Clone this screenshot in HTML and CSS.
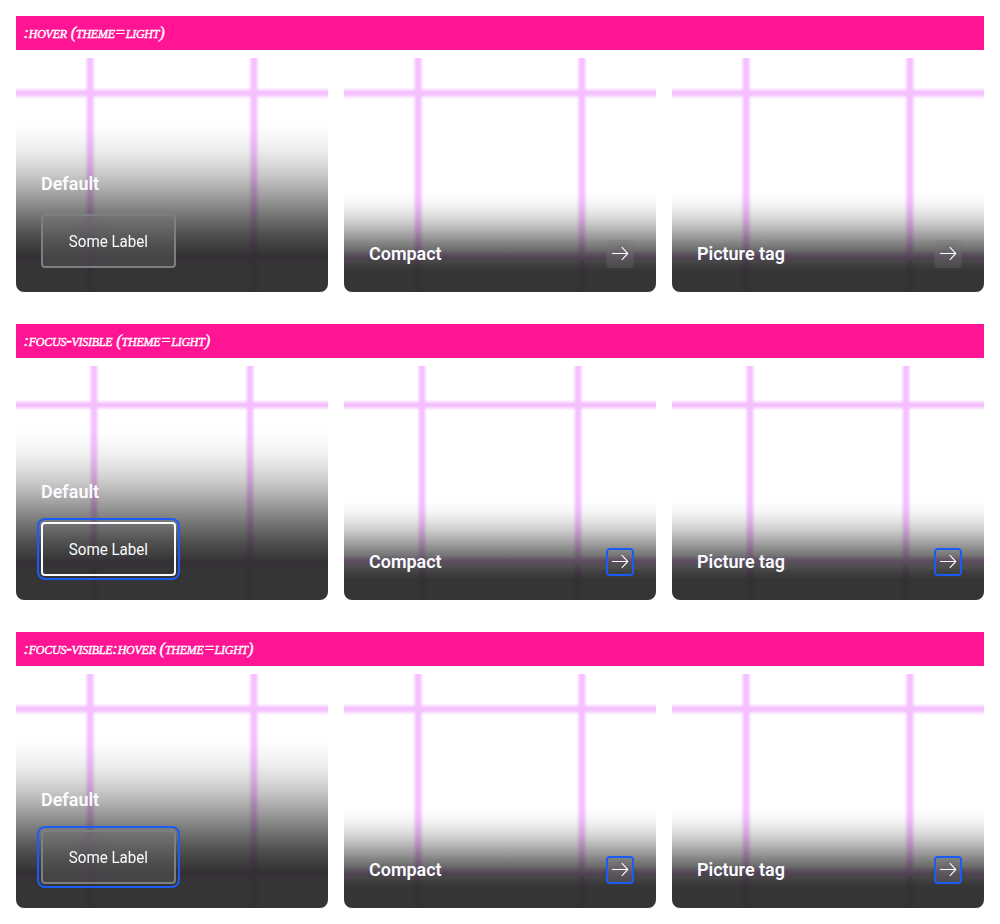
FILE: index.html
```
<!DOCTYPE html>
<html lang="en">
<head>
<meta charset="utf-8">
<title>Link tile states</title>
<link rel="stylesheet" href="styles.css">
</head>
<body>
<section class="state hover">
  <h2 class="bar">:hover (theme=light)</h2>
  <div class="tiles"></div>
</section>
<section class="state focus">
  <h2 class="bar">:focus-visible (theme=light)</h2>
  <div class="tiles"></div>
</section>
<section class="state hover focus">
  <h2 class="bar">:focus-visible:hover (theme=light)</h2>
  <div class="tiles"></div>
</section>
<template id="tiles">
  <article class="tile">
    <div class="picture"></div>
    <div class="content">
      <p class="title"><span>Default</span></p>
      <a class="button"><span>Some Label</span></a>
    </div>
  </article>
  <article class="tile compact">
    <div class="picture"></div>
    <div class="content">
      <p class="title"><span>Compact</span></p>
      <a class="arrow"><svg viewBox="0 0 28 28"><path d="M6 13.5H21.5M15.8 7.2l6 6.3-6 6.3"/></svg></a>
    </div>
  </article>
  <article class="tile compact">
    <div class="picture"></div>
    <div class="content">
      <p class="title"><span>Picture tag</span></p>
      <a class="arrow"><svg viewBox="0 0 28 28"><path d="M6 13.5H21.5M15.8 7.2l6 6.3-6 6.3"/></svg></a>
    </div>
  </article>
</template>
<script src="tiles.js"></script>
</body>
</html>
```
FILE: styles.css
```
* { box-sizing: border-box; }
body {
  margin: 0;
  padding: 16px;
  background: #fff;
  font-family: Roboto, sans-serif;
  display: flex;
  flex-direction: column;
  gap: 32px;
}
.state { display: flex; flex-direction: column; gap: 8px; }
.bar {
  margin: 0;
  height: 34px;
  padding: 0 7.5px;
  background: deeppink;
  color: #fff;
  font: italic small-caps 400 16.6px/34px "Liberation Serif", serif;
  letter-spacing: -.25px;
  -webkit-text-stroke: .4px #fff;
}
.tiles { display: grid; grid-template-columns: repeat(3, 1fr); gap: 16px; height: 234px; }
.tile {
  display: grid;
  overflow: hidden;
  border-radius: 8px;
  height: 234px;
}
.picture, .content { grid-area: 1 / 1; }
.picture {
  background:
    repeating-linear-gradient(90deg, transparent 0 72.5px, #f5bfff 77px 79px, transparent 83.5px 156px),
    repeating-linear-gradient(180deg, transparent 0 33.5px, #f5bfff 38px 40px, transparent 44.5px 156px),
    #fff;
}
.hover .picture { transform: scale(1.05); }
.content {
  position: relative;
  align-self: end;
  display: flex;
  flex-direction: column;
  align-items: flex-start;
  gap: 16px;
  padding: 52px 24px 24px 25px;
  background: linear-gradient(to top,
    rgba(31,31,31,.9) 20%,
    rgba(31,31,31,.852589) 26.67%,
    rgba(31,31,31,.768225) 33.33%,
    rgba(31,31,31,.668116) 40%,
    rgba(31,31,31,.557309) 46.67%,
    rgba(31,31,31,.442691) 53.33%,
    rgba(31,31,31,.331884) 60%,
    rgba(31,31,31,.231775) 66.67%,
    rgba(31,31,31,.147411) 73.33%,
    rgba(31,31,31,.08166) 80%,
    rgba(31,31,31,.03551) 86.67%,
    rgba(31,31,31,.008647) 93.33%,
    rgba(31,31,31,0) 100%);
}
.tile:not(.compact) .content { padding-top: 56px; }
.title {
  margin: 0;
  color: #fbfcff;
  font-weight: 600;
  font-size: 19px;
  line-height: 28px;
  white-space: nowrap;
}
.button {
  display: flex;
  justify-content: center;
  align-items: center;
  width: 135px;
  height: 54px;
  padding-top: 2px;
  border: 2px solid #fbfcff;
  border-radius: 4px;
  color: #fbfcff;
  font-size: 16px;
  line-height: 24px;
  white-space: nowrap;
}
.hover .button {
  border-color: #7e7f83;
  background: rgba(148,149,152,.18);
  backdrop-filter: blur(8px);
}
.focus .button { outline: 2px solid #1d5bf5; outline-offset: 2px; }
.compact .content {
  flex-direction: row;
  justify-content: space-between;
  align-items: center;
  padding: 52px 22px 24px 25px;
}
.arrow { width: 28px; height: 28px; border-radius: 4px; }
.arrow svg { display: block; width: 28px; height: 28px; fill: none; stroke: #fbfcff; stroke-width: 1.1; }
.hover .arrow { background: rgba(148,149,152,.13); backdrop-filter: blur(8px); }
.focus .arrow { outline: 2px solid #1d5bf5; outline-offset: -2px; }
.title span, .button span { display: inline-block; }
.title span { transform-origin: left; transform: translateY(-.5px) scaleX(.945); }
.button span { transform: translateX(-.5px) scaleX(.945); }
```
FILE: tiles.js
```
const template = document.getElementById('tiles');
document.querySelectorAll('.tiles').forEach((row) => {
  row.append(template.content.cloneNode(true));
});
```
